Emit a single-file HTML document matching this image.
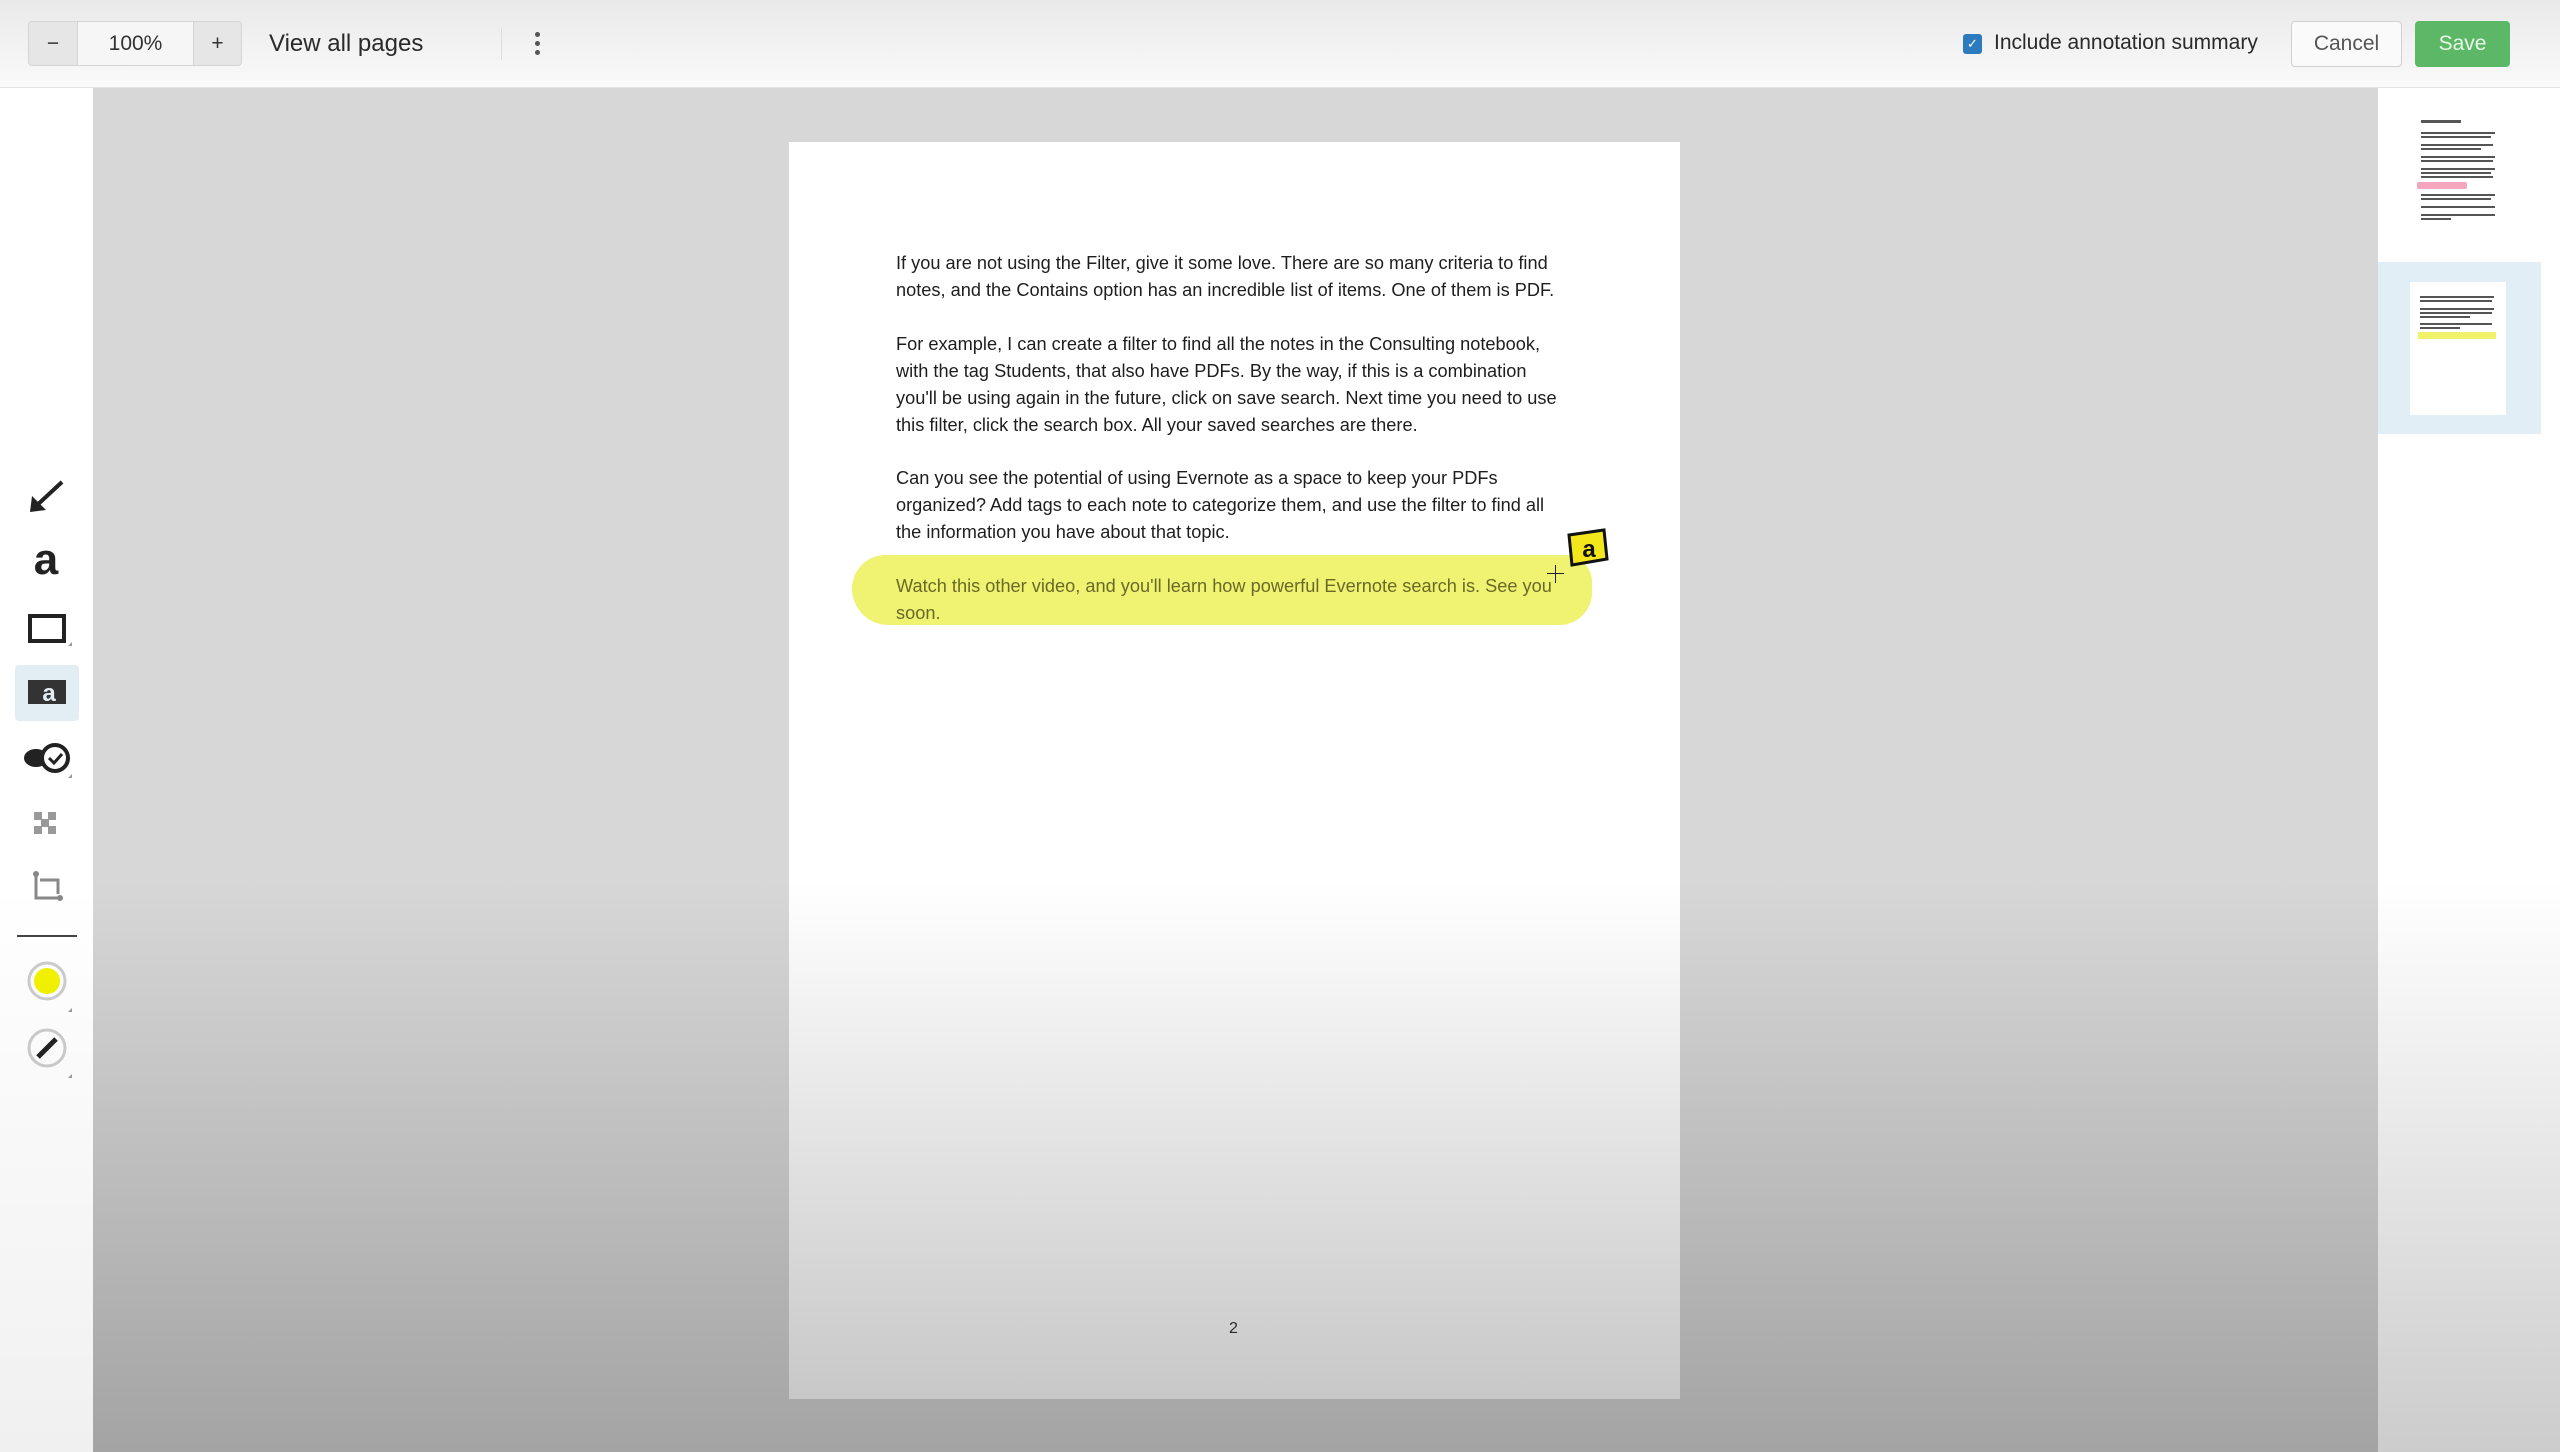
<!DOCTYPE html>
<html><head><meta charset="utf-8"><style>
*{margin:0;padding:0;box-sizing:border-box}
body{width:2560px;height:1452px;overflow:hidden;position:relative;background:#d8d7d8;font-family:"Liberation Sans",sans-serif}
.abs{position:absolute}
#top{left:0;top:0;width:2560px;height:88px;background:linear-gradient(#e9e9e9,#fafafa);border-bottom:1px solid #e4e4e4}
.seg{position:absolute;top:21px;height:45px;border:1px solid #d4d4d4;display:flex;align-items:center;justify-content:center;font-size:21px;color:#333}
.t{font-size:24px;color:#2a2a2a;position:absolute}
#left{left:0;top:88px;width:93px;height:1364px;background:#fff}
#right{left:2378px;top:88px;width:182px;height:1364px;background:#fff}
#page{left:789px;top:142px;width:891px;height:1257px;background:#fff}
.p{position:absolute;left:107px;font-size:18.2px;line-height:27px;color:#1e1e1e;white-space:nowrap}
.bar{position:absolute;height:2px;background:#555}
</style></head><body>
<div id="top" class="abs">
 <div class="seg" style="left:28px;width:50px;background:#e6e6e6;border-radius:4px 0 0 4px">−</div>
 <div class="seg" style="left:77px;width:117px;background:#f6f6f6;font-size:21px">100%</div>
 <div class="seg" style="left:193px;width:49px;background:#e6e6e6;border-radius:0 4px 4px 0">+</div>
 <div class="t" style="left:269px;top:30px">View all pages</div>
 <div class="abs" style="left:501px;top:28px;width:1px;height:32px;background:#ddd"></div>
 <div class="abs" style="left:535px;top:32px;width:5px;height:5px;border-radius:50%;background:#555;box-shadow:0 9px 0 #555,0 18px 0 #555"></div>
 <div class="abs" style="left:1963px;top:34px;width:19px;height:20px;background:#2c7bbf;border-radius:3px;color:#fff;font-size:13px;text-align:center;line-height:20px">✓</div>
 <div class="t" style="left:1994px;top:31px;font-size:21px">Include annotation summary</div>
 <div class="abs" style="left:2291px;top:21px;width:111px;height:46px;border:1px solid #d0d0d0;border-radius:4px;background:#fafafa;font-size:21px;color:#555;text-align:center;line-height:44px">Cancel</div>
 <div class="abs" style="left:2415px;top:21px;width:95px;height:46px;border-radius:4px;background:#5cb866;font-size:21px;color:#e8f7e8;text-align:center;line-height:46px">Save</div>
</div>
<div id="left" class="abs">
 <svg class="abs" style="left:0;top:0" width="93" height="1000" viewBox="0 0 93 1000">
  <g transform="translate(0,-88)">
  <path d="M62 482 L34 508" stroke="#222" stroke-width="4"/><path d="M30 512 L32 496 L46 510Z" fill="#222"/>
  <text x="46" y="574" font-family="Liberation Sans" font-weight="bold" font-size="44" text-anchor="middle" fill="#222">a</text>
  <rect x="30" y="616" width="34" height="25" fill="none" stroke="#222" stroke-width="4"/>
  <path d="M68 646 l4 -4 v4z M68 712 l4 -4 v4z M68 778 l4 -4 v4z M68 1012 l4 -4 v4z M68 1078 l4 -4 v4z" fill="#999"/>
  <rect x="15" y="665" width="64" height="56" rx="4" fill="#e3edf4"/>
  <rect x="28" y="680" width="38" height="24" fill="#333"/>
  <text x="49" y="701" font-family="Liberation Sans" font-weight="bold" font-size="24" text-anchor="middle" fill="#e3edf4">a</text>
  <ellipse cx="36" cy="758" rx="12" ry="9" fill="#222"/><circle cx="55" cy="758" r="13" fill="#fff" stroke="#222" stroke-width="4"/>
  <path d="M49 758 l5 5 l8 -9" stroke="#222" stroke-width="3" fill="none"/>
  <g fill="#999"><rect x="34" y="812" width="8" height="8"/><rect x="48" y="812" width="8" height="8"/><rect x="41" y="819" width="8" height="8"/><rect x="34" y="826" width="8" height="8"/><rect x="48" y="826" width="8" height="8"/></g>
  <path d="M36 874 v24 h24 M40 880 h18 v14" stroke="#888" stroke-width="3" fill="none"/><circle cx="36" cy="874" r="3" fill="#888"/><circle cx="60" cy="898" r="3" fill="#888"/>
  <rect x="17" y="935" width="60" height="2" fill="#444"/>
  <circle cx="47" cy="981" r="18" fill="none" stroke="#ccc" stroke-width="3"/><circle cx="47" cy="981" r="13" fill="#f2f200"/>
  <circle cx="47" cy="1048" r="18" fill="none" stroke="#ccc" stroke-width="3"/><path d="M38 1057 L56 1039" stroke="#222" stroke-width="5"/>
  </g></svg>
</div>
<div id="right" class="abs">
 <div class="abs" style="left:0;top:174px;width:163px;height:172px;background:#e1eef6"></div>
 <div class="abs" style="left:32px;top:194px;width:96px;height:133px;background:#fff"></div>
 <div class="abs" style="left:43px;top:32px">
  <div class="bar" style="top:0;width:40px;height:3px"></div>
  <div class="bar" style="top:12px;width:74px"></div><div class="bar" style="top:16px;width:70px"></div>
  <div class="bar" style="top:24px;width:72px"></div><div class="bar" style="top:28px;width:60px"></div>
  <div class="bar" style="top:36px;width:74px"></div><div class="bar" style="top:40px;width:72px"></div>
  <div class="bar" style="top:48px;width:74px"></div><div class="bar" style="top:52px;width:70px"></div><div class="bar" style="top:56px;width:72px"></div>
  <div class="abs" style="left:-4px;top:62px;width:50px;height:7px;background:#f3a6bd;border-radius:2px"></div>
  <div class="bar" style="top:74px;width:74px"></div><div class="bar" style="top:78px;width:70px"></div>
  <div class="bar" style="top:86px;width:74px"></div><div class="bar" style="top:94px;width:74px"></div><div class="bar" style="top:98px;width:30px"></div>
 </div>
 <div class="abs" style="left:42px;top:208px">
  <div class="bar" style="top:0;width:74px"></div><div class="bar" style="top:4px;width:72px"></div>
  <div class="bar" style="top:12px;width:74px"></div><div class="bar" style="top:16px;width:72px"></div><div class="bar" style="top:20px;width:50px"></div>
  <div class="bar" style="top:27px;width:72px"></div><div class="bar" style="top:31px;width:40px"></div>
  <div class="abs" style="left:-2px;top:36px;width:78px;height:7px;background:#f0f26a"></div>
 </div>
</div>
<div id="page" class="abs">
 <div class="abs" style="left:63px;top:413px;width:740px;height:70px;background:#f0f272;border-radius:35px 28px 34px 38px"></div>
 <div class="p" style="top:108px">If you are not using the Filter, give it some love. There are so many criteria to find<br>notes, and the Contains option has an incredible list of items. One of them is PDF.</div>
 <div class="p" style="top:189px">For example, I can create a filter to find all the notes in the Consulting notebook,<br>with the tag Students, that also have PDFs. By the way, if this is a combination<br>you'll be using again in the future, click on save search. Next time you need to use<br>this filter, click the search box. All your saved searches are there.</div>
 <div class="p" style="top:323px">Can you see the potential of using Evernote as a space to keep your PDFs<br>organized? Add tags to each note to categorize them, and use the filter to find all<br>the information you have about that topic.</div>
 <div class="p" style="top:431px;color:#6a6a28">Watch this other video, and you'll learn how powerful Evernote search is. See you<br>soon.</div>
 <svg class="abs" style="left:775px;top:385px" width="50" height="44"><path d="M5 8 L40 3 L43 32 L8 38Z" fill="#f3e61c" stroke="#111" stroke-width="3"/><text x="25" y="30" font-family="Liberation Sans" font-weight="bold" font-size="24" text-anchor="middle" fill="#111">a</text></svg>
 <div class="abs" style="left:766px;top:423px;width:1px;height:18px;background:#222"></div>
 <div class="abs" style="left:758px;top:431px;width:17px;height:1px;background:#222"></div>
 <div class="abs" style="left:440px;top:1178px;font-size:16px;color:#333">2</div>
</div>
<div class="abs" style="left:93px;top:880px;width:2285px;height:572px;background:linear-gradient(rgba(0,0,0,0),rgba(0,0,0,0.24))"></div>
<div class="abs" style="left:0;top:880px;width:93px;height:572px;background:linear-gradient(rgba(0,0,0,0),rgba(0,0,0,0.06))"></div>
<div class="abs" style="left:2378px;top:880px;width:182px;height:572px;background:linear-gradient(rgba(0,0,0,0),rgba(0,0,0,0.2))"></div>
</body></html>
